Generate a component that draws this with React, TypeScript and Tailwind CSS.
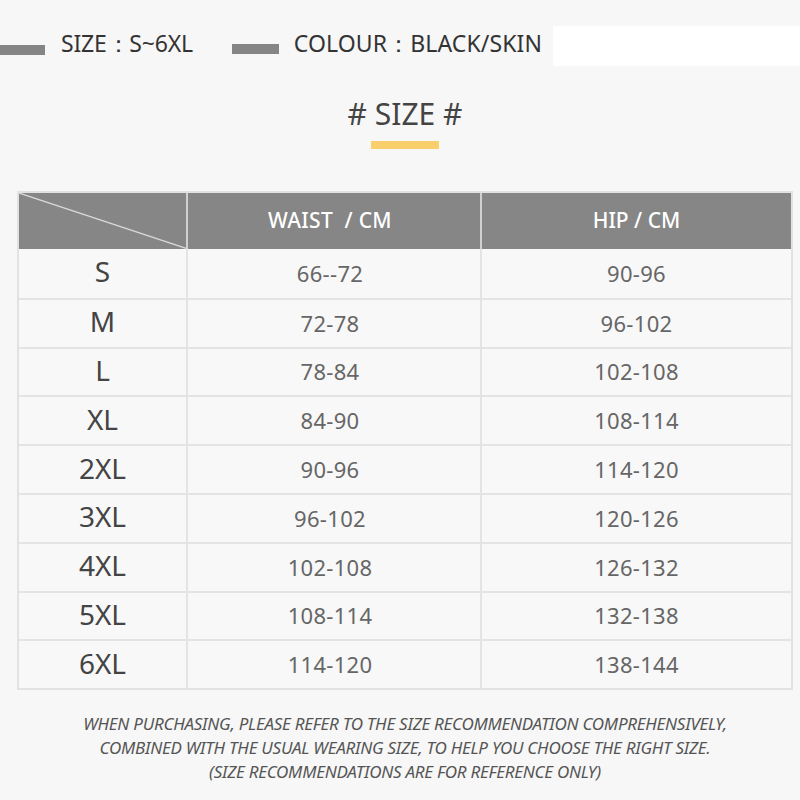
import React from "react";

const rows = [
  ["S", "66--72", "90-96"],
  ["M", "72-78", "96-102"],
  ["L", "78-84", "102-108"],
  ["XL", "84-90", "108-114"],
  ["2XL", "90-96", "114-120"],
  ["3XL", "96-102", "120-126"],
  ["4XL", "102-108", "126-132"],
  ["5XL", "108-114", "132-138"],
  ["6XL", "114-120", "138-144"],
];

export default function App() {
  return (
    <div
      className="w-[800px] h-[800px] bg-[#f7f7f7] overflow-hidden"
      style={{ fontFamily: '"Noto Sans", "Open Sans", sans-serif' }}
    >
      {/* top info bar */}
      <div className="flex items-center h-[40px] mt-[26px]">
        <div className="w-[45px] h-[10px] bg-[#858585] mt-[8px]" />
        <div className="ml-[16px] text-[23px] leading-none text-[#333] tracking-[-0.2px] pb-[6px]">
          SIZE：S~6XL
        </div>
        <div className="ml-[39px] w-[47px] h-[10px] bg-[#858585] mt-[6px]" />
        <div className="ml-[15px] text-[23px] leading-none text-[#333] tracking-[0.1px] pb-[6px]">
          COLOUR：BLACK/SKIN
        </div>
        <div className="ml-auto w-[247px] h-[40px] bg-white" />
      </div>

      {/* title */}
      <div className="ml-[17px] w-[776px] flex flex-col items-center">
        <div className="mt-[28px] text-[30px] leading-[40px] text-[#444] h-[40px]">
          # SIZE #
        </div>
        <div className="mt-[7px] w-[68px] h-[8px] bg-[#f8cf6a]" />
      </div>

      {/* table */}
      <div className="ml-[17px] mt-[42px] w-[776px] border-2 border-[#e2e2e2] bg-[#f8f8f8]">
        <div className="grid grid-cols-[169px_294px_1fr] h-[56px] bg-[#868686]">
          <div className="relative border-r-2 border-[#d0d0d0]">
            <svg className="absolute inset-0" width="169" height="56" viewBox="0 0 169 56">
              <line x1="0" y1="0" x2="169" y2="56" stroke="#d8d8d8" strokeWidth="1.3" />
            </svg>
          </div>
          <div className="flex items-center justify-center text-white text-[21px] font-medium border-r-2 border-[#d0d0d0] tracking-[0.3px] pr-[8px]">
            WAIST&nbsp;&nbsp;/ CM
          </div>
          <div className="flex items-center justify-center text-white text-[21px] font-medium">
            HIP / CM
          </div>
        </div>
        {rows.map((r, i) => (
          <div
            key={r[0]}
            className={
              "grid grid-cols-[169px_294px_1fr] h-[48.8px] " +
              (i > 0 ? "border-t-2 border-[#e4e4e4]" : "")
            }
          >
            <div className="flex items-center justify-center text-[28px] text-[#444] border-r-2 border-[#e4e4e4] pb-[4px]">
              {r[0]}
            </div>
            <div className="flex items-center justify-center text-[22px] text-[#666] border-r-2 border-[#e4e4e4] tracking-[0.3px] pr-[8px]">
              {r[1]}
            </div>
            <div className="flex items-center justify-center text-[22px] text-[#666] tracking-[0.3px]">
              {r[2]}
            </div>
          </div>
        ))}
      </div>

      {/* footer notes */}
      <div className="ml-[17px] w-[776px] mt-[22px] flex flex-col items-center text-[17px] leading-[24px] italic text-[#555] tracking-[-0.25px]">
        <div>WHEN PURCHASING, PLEASE REFER TO THE SIZE RECOMMENDATION COMPREHENSIVELY,</div>
        <div>COMBINED WITH THE USUAL WEARING SIZE, TO HELP YOU CHOOSE THE RIGHT SIZE.</div>
        <div>(SIZE RECOMMENDATIONS ARE FOR REFERENCE ONLY)</div>
      </div>
    </div>
  );
}
